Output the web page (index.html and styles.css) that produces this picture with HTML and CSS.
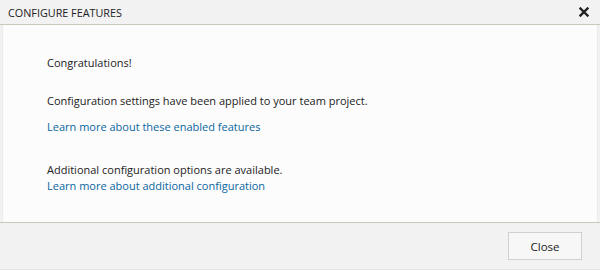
FILE: index.html
```html
<!DOCTYPE html>
<html>
<head>
<meta charset="utf-8">
<link rel="stylesheet" href="styles.css">
</head>
<body>
<div class="dialog">
  <div class="header">
    <span class="title">CONFIGURE FEATURES</span>
    <span class="close-x"><svg width="10" height="10" viewBox="0 0 10 10"><path d="M1.5 1.5 L8.5 8.5 M8.5 1.5 L1.5 8.5" stroke="#222" stroke-width="2.4" stroke-linecap="square"/></svg></span>
  </div>
  <div class="body">
    <p class="line l1">Congratulations!</p>
    <p class="line l2">Configuration settings have been applied to your team project.</p>
    <a class="link l3" href="#">Learn more about these enabled features</a>
    <p class="line l4">Additional configuration options are available.</p>
    <a class="link l5" href="#">Learn more about additional configuration</a>
  </div>
  <div class="footer">
    <button class="btn">Close</button>
  </div>
</div>
</body>
</html>
```
FILE: styles.css
```css
html, body { margin: 0; padding: 0; }
body {
  width: 600px; height: 270px;
  background: #ffffff;
  font-family: "Open Sans", "Noto Sans", sans-serif;
  font-size: 11px;
  color: #222;
}
.dialog {
  width: 600px; height: 269px;
  display: flex; flex-direction: column;
  background: #f2f2f2;
  border-bottom: 1px solid #e4e4e4;
}
.header {
  height: 24px;
  display: flex; align-items: center; justify-content: space-between;
  padding: 0 11px 0 8px;
  border-bottom: 1px solid #c8c8bc;
  background: #f2f2f2;
}
.title { font-size: 10.8px; color: #222; letter-spacing: 0; }
.close-x { display: flex; width: 10px; height: 10px; }
.body {
  flex: 1;
  background: #fcfcfc;
  margin: 0 2px;
  border-left: 1px solid #ebebeb;
  border-right: 1px solid #ebebeb;
  padding: 0 0 0 44px;
  display: flex; flex-direction: column;
}
.line { margin: 0; line-height: 16px; }
.link { color: #0a66a0; text-decoration: none; line-height: 16px; }
.l1 { margin-top: 30px; }
.l2 { margin-top: 22px; }
.l3 { margin-top: 10px; }
.l4 { margin-top: 27px; }
.l5 { margin-top: 0; }
.footer {
  height: 46px;
  border-top: 1px solid #c8c8bc;
  display: flex; align-items: center; justify-content: flex-end;
  padding: 0 18px 0 0;
}
.btn {
  width: 74px; height: 28px;
  background: #f7f7f7;
  border: 1px solid #d0d0d0;
  font-family: inherit; font-size: 11.5px; color: #222;
  padding: 0;
}
```
